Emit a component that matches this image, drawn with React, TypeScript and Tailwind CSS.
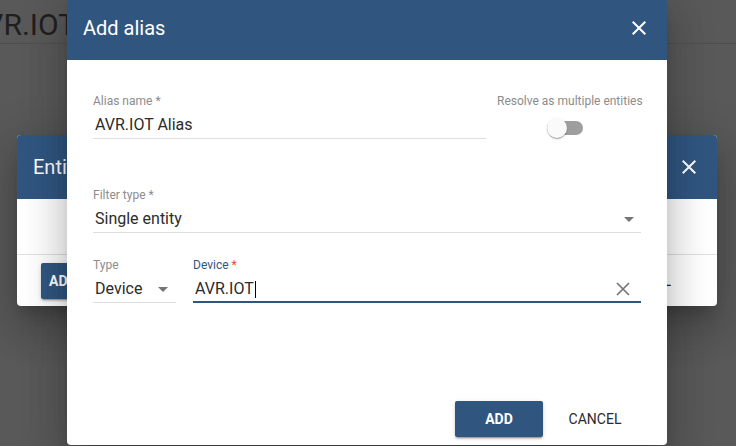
import React from "react";

function CloseIcon({ className }: { className?: string }) {
  return (
    <svg viewBox="0 0 24 24" width="24" height="24" className={className}>
      <path
        fill="currentColor"
        d="M19 6.41L17.59 5 12 10.59 6.41 5 5 6.41 10.59 12 5 17.59 6.41 19 12 13.41 17.59 19 19 17.59 13.41 12z"
      />
    </svg>
  );
}

function Arrow({ className }: { className?: string }) {
  return (
    <svg width="10" height="5" viewBox="0 0 10 5" className={className}>
      <path d="M0 0 L10 0 L5 5 Z" fill="#757575" />
    </svg>
  );
}

export default function App() {
  const shadow =
    "shadow-[0_11px_15px_-7px_rgba(0,0,0,0.2),0_24px_38px_3px_rgba(0,0,0,0.14),0_9px_46px_8px_rgba(0,0,0,0.12)]";
  return (
    <div className="relative w-[736px] h-[446px] overflow-hidden bg-[#595959] font-[Roboto,'Noto_Sans',sans-serif]">
      {/* dimmed page behind */}
      <div className="h-[44px] border-b border-[#4f4f4f] overflow-hidden">
        <div className="ml-[-34px] pt-[10px] text-[30px] leading-[30px] text-[#1f1f1f] whitespace-nowrap">
          AVR.IOT
        </div>
      </div>

      {/* background dialog */}
      <div
        className={`absolute left-[17px] top-[135px] w-[700px] h-[171px] rounded-[4px] bg-white overflow-hidden flex flex-col ${shadow}`}
      >
        <div className="h-[64px] bg-[#305680] flex items-center justify-between px-[16px] text-white">
          <span className="text-[20px] leading-[24px]">Entity aliases</span>
          <CloseIcon />
        </div>
        <div className="h-[56px] border-b border-[#e0e0e0]" />
        <div className="flex items-center justify-between pl-[24px] pr-[46px] pt-[8px]">
          <div className="h-[36px] px-[8px] w-[60px] rounded-[2px] bg-[#305680] text-white text-[14px] font-bold flex items-center shadow-[0_3px_1px_-2px_rgba(0,0,0,0.2),0_2px_2px_0_rgba(0,0,0,0.14),0_1px_5px_0_rgba(0,0,0,0.12)]">
            ADD
          </div>
          <span className="text-[14px] text-[#222]">CANCEL</span>
        </div>
      </div>

      {/* main dialog */}
      <div
        className={`absolute left-[67px] top-[-4px] w-[600px] h-[449px] rounded-[4px] bg-white overflow-hidden flex flex-col ${shadow}`}
      >
        <div className="h-[64px] shrink-0 bg-[#305680] flex items-center justify-between pl-[16px] pr-[16px] text-white">
          <span className="text-[20px] leading-[24px]">Add alias</span>
          <CloseIcon />
        </div>

        <div className="flex-1 px-[26px] pt-[34px]">
          {/* row 1 */}
          <div className="flex gap-[11px]">
            <div className="w-[393px] shrink-0">
              <div className="text-[12px] leading-[14px] text-[#8c8c8c]">Alias name *</div>
              <div className="mt-[7px] pb-[3px] pl-[2px] border-b border-[#dedede] text-[16px] leading-[20px] text-[#2b2b2b]">
                AVR.IOT Alias
              </div>
            </div>
            <div className="w-[146px] shrink-0 flex flex-col">
              <div className="text-[12px] leading-[14px] text-[#8c8c8c] whitespace-nowrap">
                Resolve as multiple entities
              </div>
              <div className="relative mt-[10px] ml-[50px] w-[36px] h-[20px] flex items-center">
                <div className="w-[36px] h-[14px] rounded-full bg-[#9e9e9e]" />
                <div className="absolute left-0 top-0 w-[20px] h-[20px] rounded-full bg-[#fafafa] shadow-[0_2px_1px_-1px_rgba(0,0,0,0.2),0_1px_1px_0_rgba(0,0,0,0.14),0_1px_3px_0_rgba(0,0,0,0.12)]" />
              </div>
            </div>
          </div>

          {/* row 2 */}
          <div className="mt-[49px]">
            <div className="text-[12px] leading-[14px] text-[#8c8c8c]">Filter type *</div>
            <div className="mt-[7px] pb-[3px] pl-[2px] border-b border-[#dedede] flex items-center justify-between">
              <span className="text-[16px] leading-[20px] text-[#2b2b2b]">Single entity</span>
              <Arrow className="mr-[7px]" />
            </div>
          </div>

          {/* row 3 */}
          <div className="mt-[25px] flex gap-[17px]">
            <div className="w-[83px] shrink-0">
              <div className="text-[12px] leading-[14px] text-[#8c8c8c]">Type</div>
              <div className="mt-[7px] pb-[3px] pl-[2px] border-b border-[#dedede] flex items-center justify-between">
                <span className="text-[16px] leading-[20px] text-[#2b2b2b]">Device</span>
                <Arrow className="mr-[8px]" />
              </div>
            </div>
            <div className="flex-1">
              <div className="text-[12px] leading-[14px] text-[#305680]">
                Device <span className="text-[#f44336]">*</span>
              </div>
              <div className="mt-[7px] pb-[2px] border-b-2 border-[#305680] flex items-center">
                <span className="text-[16px] leading-[20px] text-[#2b2b2b] pl-[2px]">AVR.IOT</span>
                <span className="ml-[1px] w-[1px] h-[17px] bg-black" />
                <span className="flex-1" />
                <svg width="14" height="14" viewBox="0 0 14 14" className="mr-[11px]">
                  <path d="M1 1 L13 13 M13 1 L1 13" stroke="#757575" strokeWidth="1.7" />
                </svg>
              </div>
            </div>
          </div>
        </div>

        <div className="flex justify-end gap-[8px] pr-[28px] pb-[8px]">
          <div className="w-[88px] h-[36px] rounded-[2px] bg-[#305680] text-white text-[14px] font-bold flex items-center justify-center shadow-[0_3px_1px_-2px_rgba(0,0,0,0.2),0_2px_2px_0_rgba(0,0,0,0.14),0_1px_5px_0_rgba(0,0,0,0.12)]">
            ADD
          </div>
          <div className="w-[88px] h-[36px] text-[14px] text-[#2b2b2b] flex items-center justify-center">
            CANCEL
          </div>
        </div>
      </div>
    </div>
  );
}
